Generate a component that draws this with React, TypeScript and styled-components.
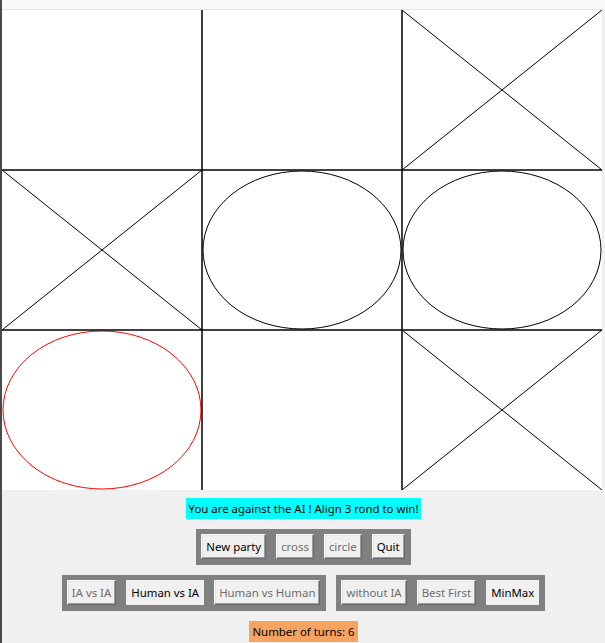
import React from "react";
import styled, { createGlobalStyle } from "styled-components";

const GlobalStyle = createGlobalStyle`
  html, body {
    margin: 0;
    padding: 0;
    background: #f0f0f0;
    overflow: hidden;
  }
  body {
    font-family: "Noto Sans", "Open Sans", sans-serif;
  }
`;

const Window = styled.div`
  display: flex;
  width: 605px;
  height: 643px;
`;

const FrameEdge = styled.div`
  width: 2px;
  background: #4a4a4a;
  flex-shrink: 0;
`;

const Main = styled.div`
  flex: 1;
  display: flex;
  flex-direction: column;
  background: #f0f0f0;
`;

const TopStrip = styled.div`
  height: 9px;
  background: #f9f9f9;
  border-bottom: 1px solid #e6e6e6;
`;

const Board = styled.svg`
  display: block;
  width: 600px;
  height: 480px;
  background: #ffffff;
`;

const Controls = styled.div`
  display: flex;
  flex-direction: column;
  align-items: center;
  padding-top: 8px;
  gap: 10px;
`;

const Banner = styled.div<{ $bg: string }>`
  background: ${(p) => p.$bg};
  color: #000;
  font-size: 11.4px;
  line-height: 21px;
  height: 21px;
  padding: 0 3px;
  white-space: nowrap;
`;

const Row = styled.div`
  display: flex;
  gap: 10px;
`;

const Group = styled.div`
  display: flex;
  align-items: center;
  gap: 10px;
  padding: 5px 6px 6px 5px;
  background: #808080;
`;

const Button = styled.button<{ $dim?: boolean; $flat?: boolean }>`
  font-family: "Noto Sans", "Open Sans", sans-serif;
  font-size: 11.4px;
  height: 25px;
  padding: 0 4px;
  margin: 0;
  background: #f0f0f0;
  color: ${(p) => (p.$dim ? "#6d6d6d" : "#000")};
  border: 1px solid;
  border-color: ${(p) =>
    p.$flat ? "#f0f0f0" : "#ffffff #696969 #696969 #ffffff"};
  box-shadow: ${(p) =>
    p.$flat ? "none" : "inset -1px -1px #a0a0a0, inset 1px 1px #e3e3e3"};
  white-space: nowrap;
  cursor: default;
`;

type Mark = "x" | "o" | "r" | null;

const cells: Mark[] = ["", "", "x", "x", "o", "o", "r", "", "x"].map((m) =>
  m === "" ? null : (m as Mark)
);

function Cell({ mark, i }: { mark: Mark; i: number }) {
  const x = (i % 3) * 200;
  const y = Math.floor(i / 3) * 160;
  if (mark === "x") {
    return (
      <g stroke="#000" strokeWidth={1}>
        <line x1={x} y1={y} x2={x + 200} y2={y + 160} />
        <line x1={x + 200} y1={y} x2={x} y2={y + 160} />
      </g>
    );
  }
  if (mark === "o" || mark === "r") {
    return (
      <ellipse
        cx={x + 100}
        cy={y + 80}
        rx={99}
        ry={79}
        fill="none"
        stroke={mark === "r" ? "#ff0000" : "#000"}
        strokeWidth={1}
      />
    );
  }
  return null;
}

export default function App() {
  return (
    <Window>
      <GlobalStyle />
      <FrameEdge />
      <Main>
        <TopStrip />
        <Board viewBox="0 0 600 480">
          {cells.map((m, i) => (
            <Cell key={i} mark={m} i={i} />
          ))}
          <g stroke="#000" strokeWidth={1.5}>
            <line x1={200} y1={0} x2={200} y2={480} />
            <line x1={400} y1={0} x2={400} y2={480} />
            <line x1={0} y1={160} x2={600} y2={160} />
            <line x1={0} y1={320} x2={600} y2={320} />
          </g>
        </Board>
        <Controls>
          <Banner $bg="#00ffff">You are against the AI ! Align 3 rond to win!</Banner>
          <Group>
            <Button>New party</Button>
            <Button $dim>cross</Button>
            <Button $dim>circle</Button>
            <Button>Quit</Button>
          </Group>
          <Row>
            <Group>
              <Button $dim>IA vs IA</Button>
              <Button $flat>Human vs IA</Button>
              <Button $dim>Human vs Human</Button>
            </Group>
            <Group>
              <Button $dim>without IA</Button>
              <Button $dim>Best First</Button>
              <Button $flat>MinMax</Button>
            </Group>
          </Row>
          <Banner $bg="#f4a460">Number of turns: 6</Banner>
        </Controls>
      </Main>
    </Window>
  );
}
